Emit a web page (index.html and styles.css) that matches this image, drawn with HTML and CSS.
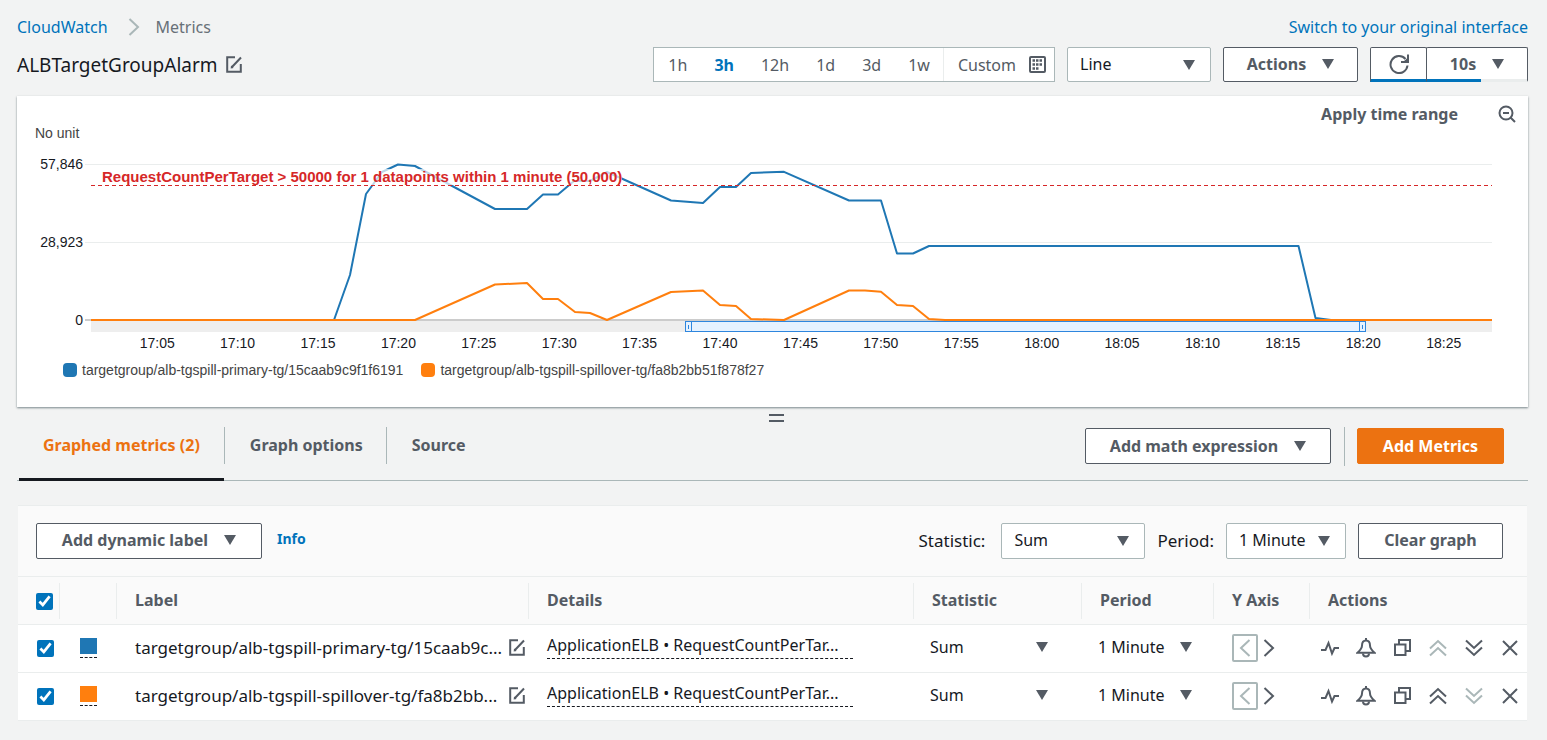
FILE: index.html
```html
<!DOCTYPE html>
<html lang="en">
<head>
	<meta charset="utf-8">
	<title>CloudWatch Metrics</title>
	<link rel="stylesheet" href="styles.css">
</head>
<body>
	<!-- icons shared by the toolbar and the table -->
	<svg class="sprite" width="0" height="0" aria-hidden="true">
		<symbol id="caret" viewBox="0 0 12 10"><path d="M0 0h12L6 10z" fill="currentColor"/></symbol>
		<symbol id="edit" viewBox="0 0 16 17"><path d="M9 1.200H1.200v14.600h13.600V8M5.500 11.500L15 1.500" fill="none" stroke="currentColor" stroke-width="2"/><path d="M4.600 12.600l.5-3 2.500 2.300z" fill="currentColor"/></symbol>
		<symbol id="left" viewBox="0 0 12 18"><path d="M10.500 1L2 9l8.500 8" fill="none" stroke="currentColor" stroke-width="2"/></symbol>
		<symbol id="right" viewBox="0 0 12 18"><path d="M1.500 1L10 9l-8.500 8" fill="none" stroke="currentColor" stroke-width="2"/></symbol>
		<symbol id="pulse" viewBox="0 0 18 16"><path d="M0 10h4.500L7.500 3l3.500 10.500 2.500-5.500H18" fill="none" stroke="currentColor" stroke-width="2"/></symbol>
		<symbol id="bell" viewBox="0 0 20 20"><path d="M10 2.500C6.500 2.500 6 5 6 7.500c0 3-2 5-4.500 7.200h17C16 12.500 14 10.500 14 7.500c0-2.500-.5-5-4-5z" fill="none" stroke="currentColor" stroke-width="2"/><path d="M10 0v2M7 15.500c0 4 6 4 6 0" fill="none" stroke="currentColor" stroke-width="2"/></symbol>
		<symbol id="copy" viewBox="0 0 17 17"><path d="M1 5.500h10.500V16H1zM5 5V1h11v11h-4" fill="none" stroke="currentColor" stroke-width="2"/></symbol>
		<symbol id="up" viewBox="0 0 18 18"><path d="M1 9.500l8-7.500 8 7.500M1 16.500L9 9l8 7.500" fill="none" stroke="currentColor" stroke-width="2"/></symbol>
		<symbol id="down" viewBox="0 0 18 18"><path d="M1 1.500L9 9l8-7.500M1 8.500L9 16l8-7.500" fill="none" stroke="currentColor" stroke-width="2"/></symbol>
		<symbol id="close" viewBox="0 0 16 16"><path d="M1 1l14 14M15 1L1 15" fill="none" stroke="currentColor" stroke-width="2"/></symbol>
	</svg>

	<header>
		<div class="topline">
			<nav class="breadcrumb">
				<a href="#">CloudWatch</a>
				<svg class="sep" width="12" height="18"><use href="#right"/></svg>
				<span>Metrics</span>
			</nav>
			<a href="#">Switch to your original interface</a>
		</div>
		<div class="toolbar">
			<h1>ALBTargetGroupAlarm</h1>
			<button class="icon" aria-label="Edit name"><svg width="16" height="17"><use href="#edit"/></svg></button>
			<div class="ranges">
				<button>1h</button>
				<button class="active">3h</button>
				<button>12h</button>
				<button>1d</button>
				<button>3d</button>
				<button>1w</button>
				<button class="custom">Custom
					<svg width="17" height="17" viewBox="0 0 17 17"><rect x="1" y="1" width="15" height="15" rx="1" fill="#fff" stroke="#545b64" stroke-width="2"/><path d="M3.500 4.500h10.500M3.500 8.500h10.500M3.500 12.500h7" stroke="#545b64" stroke-width="2.500" stroke-dasharray="2.500 1"/></svg>
				</button>
			</div>
			<div class="select type">
				<select aria-label="Graph type"><option>Line</option></select>
				<svg width="12" height="10"><use href="#caret"/></svg>
			</div>
			<button class="btn actions">Actions <svg width="12" height="10"><use href="#caret"/></svg></button>
			<div class="refresh">
				<button class="btn" aria-label="Refresh">
					<svg width="20" height="20" viewBox="0 0 20 20"><path d="M16.500 5A8.500 8.500 0 1 0 18.500 11.500" fill="none" stroke="currentColor" stroke-width="2"/><path d="M19 .5V8h-7" fill="none" stroke="currentColor" stroke-width="2"/><path d="M19 3.500V8h-5z" fill="currentColor"/></svg>
				</button>
				<button class="btn interval">10s <svg width="12" height="10"><use href="#caret"/></svg></button>
			</div>
		</div>
	</header>

	<section class="graph">
		<div class="graph-tools">
			<button class="plain">Apply time range</button>
			<button class="icon" aria-label="Zoom out">
				<svg width="18" height="18" viewBox="0 0 18 18"><circle cx="8" cy="8" r="6.500" fill="none" stroke="currentColor" stroke-width="2"/><path d="M5 8h6M12.500 12.500L17 17" stroke="currentColor" stroke-width="2"/></svg>
			</button>
		</div>
		<div class="unit">No unit</div>
		<div class="chart">
			<div class="yaxis"><span>57,846</span><span>28,923</span><span>0</span></div>
			<div class="plot">
				<svg class="lines" viewBox="0 0 1401 156" preserveAspectRatio="none">
					<path class="grid" d="M-6 .5H1401M-6 78.500H1401"/>
					<path class="base" d="M-6 156H1401"/>
					<path class="line primary" d="M0 156H243L259 111 275 30 291 8 307 .5 324 2 404 45H436L452 30.500H467L483 17H499L516 8 580 36.500 612 39 629 23H645L660 9 693 7.800 758 36.500H790L806 89.500H822L838 82H1207.500L1224.500 154 1240 156H1401"/>
					<path class="line spill" d="M0 156H324L404 120.500 436 119 452 135H467L484 148 499 149 516 156 580 128 612 126.500 629 141 645 142 660 155 693 156 758 126.500H774L790 127.700 806 141 822 142 838 155 854 156H1401"/>
					<path class="alarm" d="M0 21.500H1401"/>
				</svg>
				<div class="alarm-label">RequestCountPerTarget &gt; 50000 for 1 datapoints within 1 minute (50,000)</div>
				<div class="brush"><div class="window"><i></i><i></i></div></div>
				<div class="xaxis">
					<span>17:05</span><span>17:10</span><span>17:15</span><span>17:20</span><span>17:25</span><span>17:30</span><span>17:35</span><span>17:40</span><span>17:45</span><span>17:50</span><span>17:55</span><span>18:00</span><span>18:05</span><span>18:10</span><span>18:15</span><span>18:20</span><span>18:25</span>
				</div>
			</div>
		</div>
		<ul class="legend">
			<li><i class="bg-primary"></i>targetgroup/alb-tgspill-primary-tg/15caab9c9f1f6191</li>
			<li><i class="bg-spill"></i>targetgroup/alb-tgspill-spillover-tg/fa8b2bb51f878f27</li>
		</ul>
	</section>

	<div class="resize"><i></i></div>

	<div class="tabs">
		<button class="tab active">Graphed metrics (2)</button>
		<button class="tab">Graph options</button>
		<button class="tab">Source</button>
		<button class="btn math">Add math expression <svg width="12" height="10"><use href="#caret"/></svg></button>
		<div class="rule"></div>
		<button class="btn primary-btn">Add Metrics</button>
	</div>

	<section class="metrics">
		<div class="metrics-bar">
			<button class="btn dynamic">Add dynamic label <svg width="12" height="10"><use href="#caret"/></svg></button>
			<a class="info" href="#">Info</a>
			<label for="stat">Statistic:</label>
			<div class="select stat">
				<select id="stat"><option>Sum</option></select>
				<svg width="12" height="10"><use href="#caret"/></svg>
			</div>
			<label for="period">Period:</label>
			<div class="select period">
				<select id="period"><option>1 Minute</option></select>
				<svg width="12" height="10"><use href="#caret"/></svg>
			</div>
			<button class="btn clear">Clear graph</button>
		</div>
		<table>
			<colgroup>
				<col class="c-check"><col class="c-color"><col class="c-label"><col><col class="c-stat"><col class="c-period"><col class="c-axis"><col class="c-actions">
			</colgroup>
			<thead>
				<tr>
					<th><div class="check-all"><input type="checkbox" checked aria-label="Select all"></div></th>
					<th><div></div></th>
					<th><div>Label</div></th>
					<th><div>Details</div></th>
					<th><div>Statistic</div></th>
					<th><div>Period</div></th>
					<th><div>Y Axis</div></th>
					<th><div>Actions</div></th>
				</tr>
			</thead>
			<tbody>
				<tr>
					<td><input type="checkbox" checked aria-label="Select primary"></td>
					<td><button class="swatch" aria-label="Color"><i class="bg-primary"></i></button></td>
					<td><div class="name"><span>targetgroup/alb-tgspill-primary-tg/15caab9c...</span><button class="icon" aria-label="Edit label"><svg width="16" height="17"><use href="#edit"/></svg></button></div></td>
					<td class="details"><span>ApplicationELB • RequestCountPerTar...</span></td>
					<td class="pick"><div class="select bare"><select aria-label="Statistic"><option>Sum</option></select><svg width="12" height="10"><use href="#caret"/></svg></div></td>
					<td class="pick"><div class="select bare"><select aria-label="Period"><option>1 Minute</option></select><svg width="12" height="10"><use href="#caret"/></svg></div></td>
					<td><div class="axis"><button class="boxed" disabled aria-label="Left axis"><svg width="12" height="18"><use href="#left"/></svg></button><button class="icon" aria-label="Right axis"><svg width="12" height="18"><use href="#right"/></svg></button></div></td>
					<td>
						<div class="row-actions">
							<button class="icon" aria-label="Anomaly detection"><svg width="18" height="16"><use href="#pulse"/></svg></button>
							<button class="icon" aria-label="Create alarm"><svg width="20" height="20"><use href="#bell"/></svg></button>
							<button class="icon" aria-label="Duplicate"><svg width="17" height="17"><use href="#copy"/></svg></button>
							<button class="icon" disabled aria-label="Move up"><svg width="18" height="18"><use href="#up"/></svg></button>
							<button class="icon" aria-label="Move down"><svg width="18" height="18"><use href="#down"/></svg></button>
							<button class="icon" aria-label="Remove"><svg width="16" height="16"><use href="#close"/></svg></button>
						</div>
					</td>
				</tr>
				<tr>
					<td><input type="checkbox" checked aria-label="Select spillover"></td>
					<td><button class="swatch" aria-label="Color"><i class="bg-spill"></i></button></td>
					<td><div class="name"><span>targetgroup/alb-tgspill-spillover-tg/fa8b2bb...</span><button class="icon" aria-label="Edit label"><svg width="16" height="17"><use href="#edit"/></svg></button></div></td>
					<td class="details"><span>ApplicationELB • RequestCountPerTar...</span></td>
					<td class="pick"><div class="select bare"><select aria-label="Statistic"><option>Sum</option></select><svg width="12" height="10"><use href="#caret"/></svg></div></td>
					<td class="pick"><div class="select bare"><select aria-label="Period"><option>1 Minute</option></select><svg width="12" height="10"><use href="#caret"/></svg></div></td>
					<td><div class="axis"><button class="boxed" disabled aria-label="Left axis"><svg width="12" height="18"><use href="#left"/></svg></button><button class="icon" aria-label="Right axis"><svg width="12" height="18"><use href="#right"/></svg></button></div></td>
					<td>
						<div class="row-actions">
							<button class="icon" aria-label="Anomaly detection"><svg width="18" height="16"><use href="#pulse"/></svg></button>
							<button class="icon" aria-label="Create alarm"><svg width="20" height="20"><use href="#bell"/></svg></button>
							<button class="icon" aria-label="Duplicate"><svg width="17" height="17"><use href="#copy"/></svg></button>
							<button class="icon" aria-label="Move up"><svg width="18" height="18"><use href="#up"/></svg></button>
							<button class="icon" disabled aria-label="Move down"><svg width="18" height="18"><use href="#down"/></svg></button>
							<button class="icon" aria-label="Remove"><svg width="16" height="16"><use href="#close"/></svg></button>
						</div>
					</td>
				</tr>
			</tbody>
		</table>
	</section>
</body>
</html>
```
FILE: styles.css
```css
* {
	box-sizing: border-box;
}

body {
	margin: 0;
	padding: 12px 19px 20px 17px;
	background: #f2f3f3;
	color: #16191f;
	font: 16px/30px "Noto Sans", "Open Sans", sans-serif;
}

svg {
	display: block;
	flex: none;
}

.sprite {
	position: absolute;
}

a {
	color: #0073bb;
	text-decoration: none;
}

button, select {
	margin: 0;
	padding: 0;
	border: 0;
	background: none;
	color: #545b64;
	font: inherit;
}

button:disabled {
	color: #aab7b8;
}

h1 {
	margin: 0 8px 0 0;
	font-size: 19px;
	font-weight: 400;
}

/* header */

.topline {
	display: flex;
	justify-content: space-between;
	height: 35px;
}

.breadcrumb {
	display: flex;
	align-items: center;
	height: 30px;
	color: #687078;
}

.breadcrumb .sep {
	margin: 0 16px 0 20px;
	color: #aab7b8;
}

.toolbar {
	display: flex;
	align-items: center;
	height: 35px;
}

.ranges {
	display: flex;
	height: 35px;
	margin-left: auto;
	border: 1px solid #aab7b8;
	background: #fff;
}

.ranges button {
	padding: 0 13px 0 14px;
}

.ranges .active {
	color: #0073bb;
	font-weight: 700;
}

.ranges .custom {
	display: flex;
	align-items: center;
	gap: 13px;
	padding: 0 8px 0 14px;
	border-left: 1px solid #eaeded;
}

.btn {
	display: flex;
	align-items: center;
	justify-content: center;
	gap: 16px;
	height: 36px;
	border: 1px solid #545b64;
	border-radius: 2px;
	background: #fff;
	font-weight: 700;
}

.select {
	display: grid;
	align-items: center;
	height: 36px;
	border: 1px solid #aab7b8;
	border-radius: 2px;
	background: #fff;
}

.select select {
	grid-area: 1 / 1;
	height: 100%;
	padding: 0 12px 2px;
	appearance: none;
	color: #16191f;
}

.select svg {
	grid-area: 1 / 1;
	justify-self: end;
	margin-right: 15px;
	color: #545b64;
	pointer-events: none;
}

.toolbar .btn, .toolbar .select {
	height: 35px;
	margin-left: 12px;
}

.type, .stat {
	width: 144px;
}

.actions {
	width: 135px;
}

.toolbar .btn, .dynamic, .clear {
	padding-bottom: 2px;
}

.refresh {
	display: flex;
	width: 158px;
	margin-left: 12px;
	background: linear-gradient(to right, #0073bb 70%, #eaeded 70%) bottom / 100% 3px no-repeat, #fff;
}

.toolbar .refresh .btn {
	width: 57px;
	margin: 0;
	border-bottom-color: transparent;
	background: none;
}

.toolbar .refresh .interval {
	flex: 1;
	margin-left: -1px;
}

/* graph */

.graph {
	margin-top: 14px;
	padding: 7px 0 23px;
	height: 311px;
	background: #fff;
	box-shadow: 0 1px 2px rgba(0, 28, 36, .5);
	color: #444;
	font: 14px/16px "Liberation Sans", Arial, sans-serif;
}

.graph-tools {
	display: flex;
	justify-content: flex-end;
	align-items: center;
	gap: 40px;
	height: 22px;
	padding-right: 12px;
	font: 16px/22px "Noto Sans", "Open Sans", sans-serif;
}

.plain {
	font-weight: 700;
}

.unit {
	height: 31px;
	padding-left: 18px;
}

.chart {
	display: flex;
	margin-top: 8px;
	padding-right: 36px;
	color: #16191f;
}

.yaxis {
	display: flex;
	flex-direction: column;
	justify-content: space-between;
	width: 66px;
	height: 172px;
	margin: -8px 8px 0 0;
	text-align: right;
}

.plot {
	display: grid;
	flex: 1;
	grid-template-rows: 156px 12px auto;
	min-width: 0;
}

.lines {
	grid-area: 1 / 1;
	width: 100%;
	height: 156px;
	overflow: visible;
}

.lines path {
	fill: none;
	vector-effect: non-scaling-stroke;
}

.lines .grid {
	stroke: #eaeded;
}

.lines .base {
	stroke: #ccc;
	stroke-width: 2;
}

.lines .line {
	stroke-width: 2;
	stroke-linejoin: round;
}

.lines .primary {
	stroke: #1f77b4;
}

.lines .spill {
	stroke: #ff7f0e;
}

.lines .alarm {
	stroke: #d62728;
	stroke-dasharray: 4 3;
}

.alarm-label {
	grid-area: 1 / 1;
	align-self: start;
	justify-self: start;
	margin: 5px 0 0 11px;
	background: rgba(255, 255, 255, .7);
	color: #d62728;
	font-size: 15px;
	font-weight: 700;
}

.brush {
	margin-top: 1px;
	background: #eee;
}

.window {
	display: flex;
	justify-content: space-between;
	width: 48.6%;
	height: 11px;
	margin-left: 42.4%;
	border: 1px solid #2e86de;
	background: #e6f2ff;
}

.window i {
	width: 6px;
	border: solid #2e86de;
	border-width: 0 1px 0 0;
	background: linear-gradient(#2e86de, #2e86de) center / 1px 4px no-repeat;
}

.window i:last-child {
	border-width: 0 0 0 1px;
}

.xaxis {
	display: flex;
	padding: 3px 8px 0 26px;
}

.xaxis span {
	flex: 1;
	text-align: center;
}

.legend {
	display: flex;
	gap: 18px;
	margin: 11px 0 0 46px;
	padding: 0;
	list-style: none;
}

.legend li {
	display: flex;
	align-items: center;
	gap: 5px;
}

.legend i {
	width: 14px;
	height: 14px;
	border-radius: 4px;
}

.bg-primary {
	background: #1f77b4;
}

.bg-spill {
	background: #ff7f0e;
}

.resize {
	height: 20px;
	padding: 7px 0 0 7px;
}

.resize i {
	display: block;
	width: 15px;
	height: 8px;
	margin: 0 auto;
	border: solid #545b64;
	border-width: 2px 0;
}

/* tabs */

.tabs {
	display: flex;
	height: 54px;
	border-bottom: 1px solid #aab7b8;
}

.tab {
	height: 37px;
	padding: 0 24px 2px 25px;
	border-right: 1px solid #aab7b8;
	font-weight: 700;
}

.tab.active {
	height: 54px;
	margin-left: 2px;
	padding: 0 24px 16px;
	border-right: 0;
	border-bottom: 3px solid #16191f;
	color: #ec7211;
}

.tab.active + .tab {
	padding: 0 23px 2px 25px;
	border-left: 1px solid #aab7b8;
}

.tab:nth-child(3) {
	border-right: 0;
}

.math {
	width: 246px;
	margin: 1px 13px 0 auto;
}

.rule {
	width: 1px;
	height: 39px;
	margin-right: 12px;
	background: #aab7b8;
}

.primary-btn {
	width: 147px;
	margin: 1px 24px 0 0;
	border-color: #ec7211;
	background: #ec7211;
	color: #fff;
}

/* metrics table */

.metrics {
	margin: 24px 1px 0;
	border-top: 1px solid #eaeded;
	background: #fafafa;
}

.metrics-bar {
	display: flex;
	align-items: center;
	height: 70px;
	padding: 0 24px 0 18px;
}

.dynamic {
	width: 226px;
}

.info {
	margin: 0 auto 5px 15px;
	font-size: 14px;
	font-weight: 700;
}

.metrics-bar label {
	font-size: 17px;
}

.metrics-bar .select {
	margin: 0 12px 0 16px;
}

.metrics-bar .period {
	width: 120px;
	margin-left: 12px;
}

.clear {
	width: 145px;
}

table {
	width: 100%;
	border-collapse: collapse;
	table-layout: fixed;
}

.c-check { width: 42px; }
.c-color { width: 57px; }
.c-label { width: 412px; }
.c-stat { width: 168px; }
.c-period { width: 132px; }
.c-axis { width: 96px; }
.c-actions { width: 217px; }

th, td {
	height: 48px;
	padding: 0;
	border-top: 1px solid #eaeded;
	text-align: left;
}

th {
	color: #545b64;
}

th div {
	display: flex;
	align-items: center;
	height: 36px;
	padding: 0 0 2px 18px;
	border-right: 1px solid #eaeded;
}

th .check-all {
	padding: 2px 0 0 18px;
}

th:last-child div {
	border-right: 0;
}

tbody {
	border-bottom: 1px solid #eaeded;
	background: #fff;
}

td {
	padding: 0 0 2px 18px;
}

td:first-child {
	padding: 0 0 0 19px;
}

input[type="checkbox"] {
	display: block;
	width: 17px;
	height: 17px;
	margin: 0;
	accent-color: #0073bb;
}

.swatch {
	display: block;
	margin-left: 2px;
	padding-bottom: 3px;
	border-bottom: 1px dashed #16191f;
}

.swatch i {
	display: block;
	width: 17px;
	height: 16px;
}

.name {
	display: flex;
	align-items: center;
	justify-content: space-between;
	padding-right: 4px;
	font-size: 17px;
}

td.details {
	padding-bottom: 6px;
}

.details span {
	display: block;
	width: 306px;
	border-bottom: 1px dashed #16191f;
	line-height: 25px;
}

td.pick {
	padding: 0 0 2px 16px;
}

.select.bare {
	border: 0;
	background: none;
}

.bare select {
	padding: 0 0 2px;
}

.bare svg {
	margin: 0 34px 2px 0;
}

.pick + .pick .bare svg {
	margin-right: 22px;
}

.axis {
	display: flex;
	align-items: center;
	gap: 5px;
}

.boxed {
	display: flex;
	align-items: center;
	justify-content: center;
	width: 26px;
	height: 28px;
	border: 2px solid #aab7b8;
	border-radius: 2px;
}

.row-actions {
	display: grid;
	grid-template-columns: repeat(6, 36px);
	align-items: center;
	margin-left: -16px;
}

.row-actions .icon {
	justify-self: center;
}
```
